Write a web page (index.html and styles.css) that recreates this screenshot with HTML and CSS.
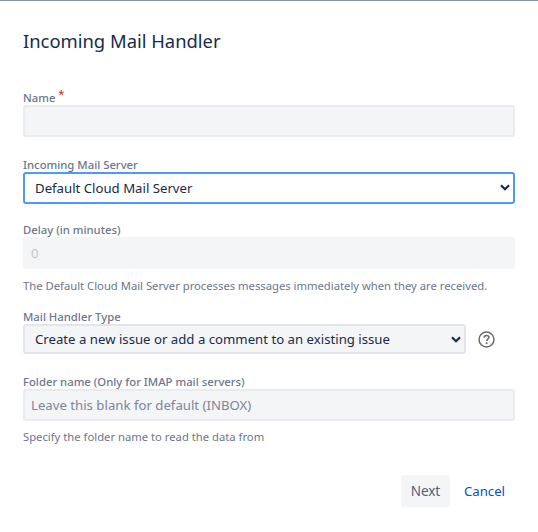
FILE: index.html
```html
<!DOCTYPE html>
<html lang="en">
<head>
    <meta charset="UTF-8">
    <meta name="viewport" content="width=device-width, initial-scale=1.0">
    <title>Incoming Mail Handler</title>
    <link rel="stylesheet" href="styles.css">
</head>
<body>
    <div class="dialog">
        <h1 class="dialog-title">Incoming Mail Handler</h1>

        <div class="field field-name">
            <label class="field-label" for="name">Name <span class="required">*</span></label>
            <input class="text-input" type="text" id="name" disabled>
        </div>

        <div class="field field-server">
            <label class="field-label" for="server">Incoming Mail Server</label>
            <div class="select-wrap">
                <select class="select-input select-focus" id="server">
                    <option>Default Cloud Mail Server</option>
                </select>
                <svg class="chevron" width="10" height="7" viewBox="0 0 10 7"><path d="M1 1.2 L5 5.2 L9 1.2" fill="none" stroke="#172b4d" stroke-width="2.2"/></svg>
            </div>
        </div>

        <div class="field field-delay">
            <label class="field-label" for="delay">Delay (in minutes)</label>
            <input class="text-input input-faded" type="text" id="delay" value="0" disabled>
            <p class="help-text help-delay">The Default Cloud Mail Server processes messages immediately when they are received.</p>
        </div>

        <div class="field field-type">
            <label class="field-label" for="type">Mail Handler Type</label>
            <div class="type-row">
                <div class="select-wrap">
                    <select class="select-input" id="type">
                        <option>Create a new issue or add a comment to an existing issue</option>
                    </select>
                    <svg class="chevron" width="10" height="7" viewBox="0 0 10 7"><path d="M1 1.2 L5 5.2 L9 1.2" fill="none" stroke="#172b4d" stroke-width="2.2"/></svg>
                </div>
                <svg class="help-icon" width="17" height="17" viewBox="0 0 18 18">
                    <circle cx="9" cy="9" r="7.9" fill="none" stroke="#6b6b6b" stroke-width="1.6"/>
                    <path d="M6.4 7.1 C6.5 5.5 7.6 4.7 9 4.7 C10.5 4.7 11.6 5.6 11.6 6.9 C11.6 8.5 9.1 8.8 9.1 10.7" fill="none" stroke="#6b6b6b" stroke-width="1.6"/>
                    <circle cx="9.1" cy="13" r="1.1" fill="#6b6b6b"/>
                </svg>
            </div>
        </div>

        <div class="field field-folder">
            <label class="field-label" for="folder">Folder name (Only for IMAP mail servers)</label>
            <input class="text-input" type="text" id="folder" placeholder="Leave this blank for default (INBOX)">
            <p class="help-text">Specify the folder name to read the data from</p>
        </div>

        <div class="dialog-footer">
            <button class="next-button">Next</button>
            <a class="cancel-link" href="#">Cancel</a>
        </div>
    </div>
</body>
</html>
```

FILE: styles.css
```css
* {
    box-sizing: border-box;
}

body {
    margin: 0;
    background-color: #ffffff;
    font-family: "Noto Sans", "Open Sans", sans-serif;
    color: #172b4d;
    border-top: 1px solid #8993a4;
}

.dialog {
    padding: 26px 23px 0 23px;
    width: 538px;
}

.dialog-title {
    margin: 0;
    font-size: 18.4px;
    font-weight: 400;
    line-height: 28px;
}

.field-name {
    margin-top: 35px;
}

.field-server {
    margin-top: 20px;
}

.field-delay {
    margin-top: 18px;
}

.field-type {
    margin-top: 15px;
}

.field-folder {
    margin-top: 20px;
}

.field-label {
    display: block;
    font-size: 11.3px;
    font-weight: 550;
    line-height: 15px;
    color: #6b778c;
}

.required {
    color: #de350b;
    position: relative;
    top: -4px;
}

.text-input {
    display: block;
    width: 492px;
    height: 32px;
    padding: 0 6px;
    background-color: #f4f5f7;
    border: 2px solid #e9ebee;
    border-radius: 3px;
    font-family: inherit;
    font-size: 13.2px;
    color: #172b4d;
    outline: none;
}

.text-input::placeholder {
    color: #7a869a;
}

.input-faded {
    border-color: #f4f5f7;
    color: #c1c7d0;
}

.select-wrap {
    position: relative;
}

.select-input {
    display: block;
    height: 30px;
    width: 443px;
    padding: 0 10px;
    appearance: none;
    background-color: #f4f5f7;
    border: 2px solid #e3e5ea;
    border-radius: 3px;
    font-family: inherit;
    font-size: 13.2px;
    color: #172b4d;
}

.select-focus {
    width: 492px;
    height: 32px;
    background-color: #ffffff;
    border-color: #4c9aff;
}

.chevron {
    position: absolute;
    right: 5px;
    top: 12px;
}

.help-text {
    margin: 8px 0 0 0;
    font-size: 11.25px;
    line-height: 16px;
    color: #6b778c;
}

.help-delay {
    margin-top: 9px;
}

.type-row {
    display: flex;
    align-items: center;
    gap: 12px;
}

.dialog-footer {
    display: flex;
    justify-content: flex-end;
    align-items: center;
    gap: 14px;
    margin-top: 30px;
    padding-right: 10px;
}

.next-button {
    width: 49px;
    height: 32px;
    padding: 0;
    background-color: #f4f5f7;
    border: none;
    border-radius: 3px;
    font-family: inherit;
    font-size: 13.5px;
    color: #505f79;
}

.cancel-link {
    font-size: 13.2px;
    color: #0052cc;
    text-decoration: none;
}
```
